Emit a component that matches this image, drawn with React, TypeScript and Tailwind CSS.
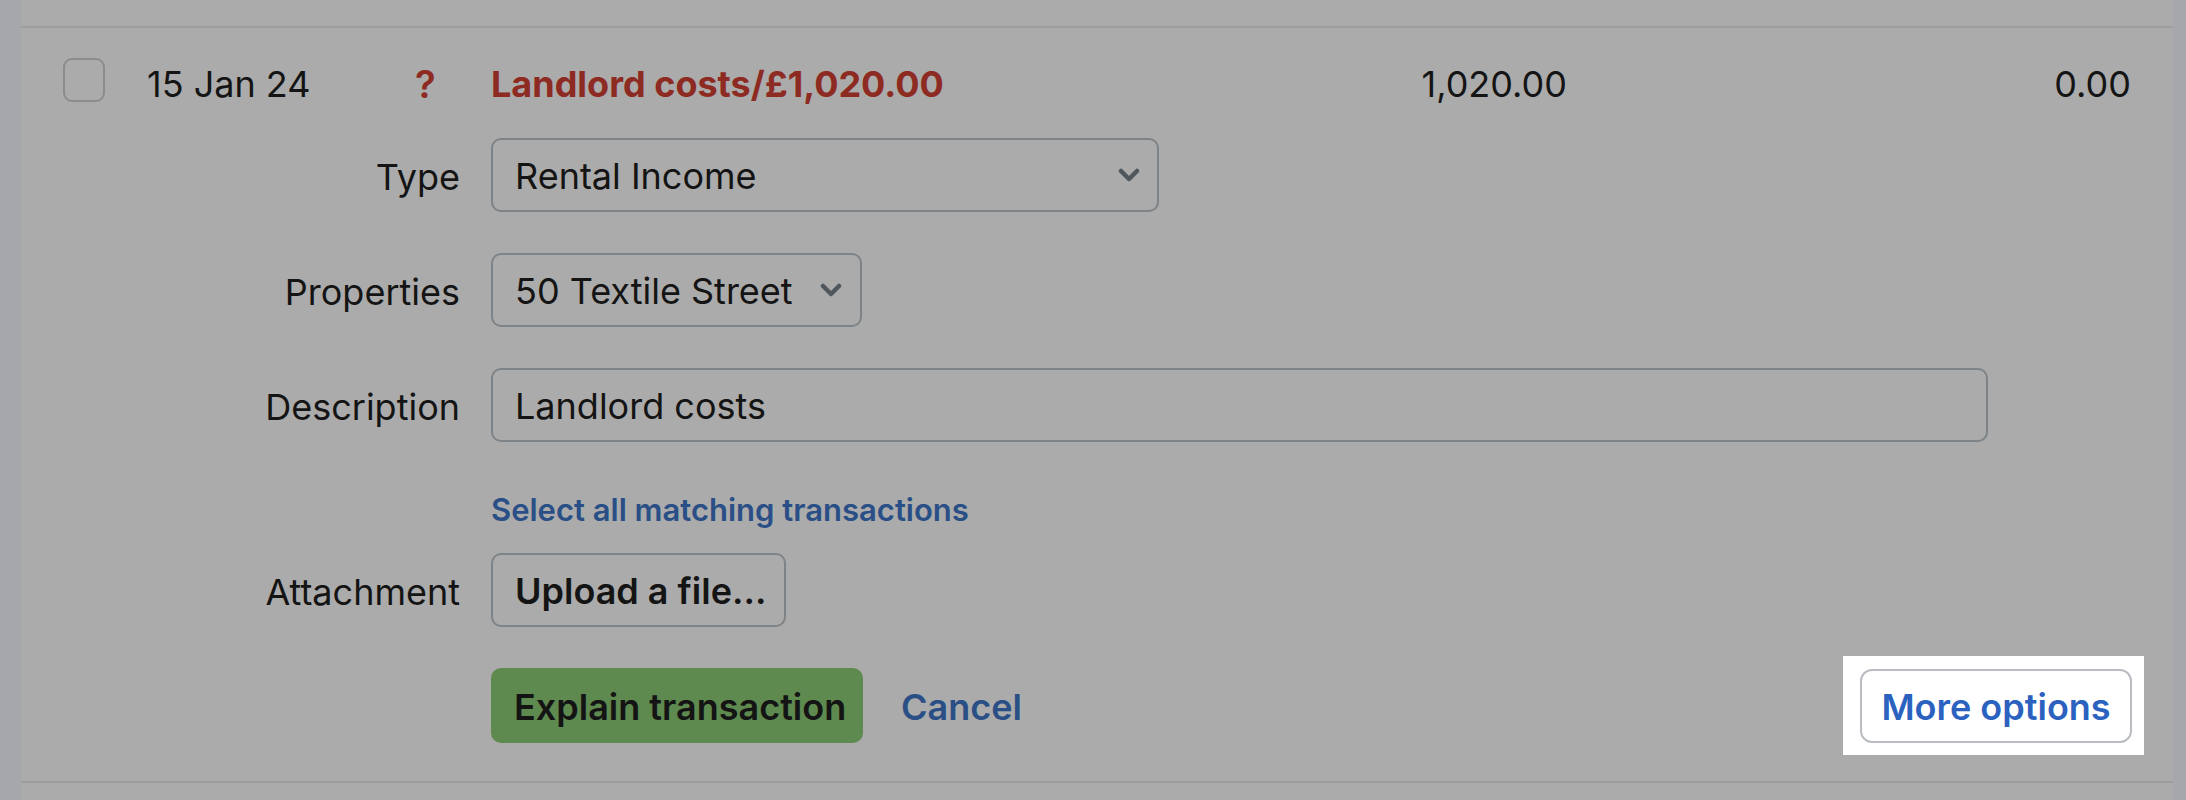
import React from "react"

function Chevron() {
  return (
    <svg width="22" height="14" viewBox="0 0 22 14" fill="none">
      <path d="M3 3l8 8 8-8" stroke="#4f575d" strokeWidth="4.5" strokeLinecap="round" strokeLinejoin="round" />
    </svg>
  )
}

function Label({ children }: { children: React.ReactNode }) {
  return <div className="w-[439px] shrink-0 text-right pt-[4px]">{children}</div>
}

export default function App() {
  return (
    <div
      className="w-[2186px] h-[800px] flex bg-[#ababab] text-[#141414] overflow-hidden"
      style={{ fontFamily: "Inter, 'Noto Sans', sans-serif" }}
    >
      <div className="w-[21px] shrink-0 bg-[#a5a7aa]" />
      <div className="flex-1 flex flex-col">
        <div className="h-[26px] shrink-0" />
        <div className="border-t-2 border-b-2 border-[#9c9d9e] flex flex-col pt-[30px] pb-[38px]">
          {/* transaction row */}
          <div className="flex items-center h-[44px] text-[36px]">
            <div className="ml-[42px] w-[42px] h-[44px] rounded-[9px] border-2 border-[#8a8d90] shrink-0" />
            <div className="ml-[42px] w-[268px] shrink-0 mt-[8px]">15 Jan 24</div>
            <div className="w-[76px] shrink-0 font-semibold text-[#8d2a22] mt-[8px] text-[38px]">?</div>
            <div className="w-[730px] shrink-0 font-bold text-[#8d2a22] mt-[8px]">Landlord costs/£1,020.00</div>
            <div className="w-[346px] shrink-0 text-right mt-[8px]">1,020.00</div>
            <div className="flex-1 text-right pr-[42px] mt-[8px]">0.00</div>
          </div>

          <div className="flex items-center gap-[31px] mt-[36px] text-[36px]">
            <Label>Type</Label>
            <div className="w-[668px] h-[74px] rounded-[10px] border-2 border-[#7e8387] flex items-center justify-between pl-[22px] pr-[17px]">
              <span className="pt-[2px]">Rental Income</span>
              <Chevron />
            </div>
          </div>

          <div className="flex items-center gap-[31px] mt-[41px] text-[36px]">
            <Label>Properties</Label>
            <div className="w-[371px] h-[74px] rounded-[10px] border-2 border-[#7e8387] flex items-center justify-between pl-[22px] pr-[18px]">
              <span className="pt-[2px]">50 Textile Street</span>
              <Chevron />
            </div>
          </div>

          <div className="flex items-center gap-[31px] mt-[41px] text-[36px]">
            <Label>Description</Label>
            <div className="w-[1497px] h-[74px] rounded-[10px] border-2 border-[#7e8387] flex items-center pl-[22px]">
              <span className="pt-[2px]">Landlord costs</span>
            </div>
          </div>

          <div className="flex items-center gap-[31px] mt-[46px] h-[44px]">
            <Label>{""}</Label>
            <span className="text-[31px] font-semibold text-[#2a4f86]">Select all matching transactions</span>
          </div>

          <div className="flex items-center gap-[31px] mt-[21px] text-[36px]">
            <Label>Attachment</Label>
            <div className="w-[295px] h-[74px] rounded-[10px] border-2 border-[#7e8387] flex items-center pl-[22px] font-semibold">
              <span className="pt-[2px]">Upload a file...</span>
            </div>
          </div>

          <div className="flex items-center mt-[41px] text-[36px] pr-[29px]">
            <div className="w-[470px] shrink-0" />
            <div className="w-[372px] h-[75px] rounded-[10px] bg-[#5e8a50] flex items-center pl-[23px] font-semibold">
              <span className="pt-[2px]">Explain transaction</span>
            </div>
            <span className="ml-[38px] pt-[2px] font-semibold text-[#2a4f86]">Cancel</span>
            <div className="ml-auto bg-white pl-[17px] pr-[12px] pt-[13px] pb-[12px] -my-[13px]">
              <div className="w-[272px] h-[74px] rounded-[12px] border-2 border-[#b9bdc1] flex items-center justify-center font-semibold text-[#2b62bf]">
                <span className="pt-[2px]">More options</span>
              </div>
            </div>
          </div>
        </div>
      </div>
      <div className="w-[13px] shrink-0 bg-[#a5a7aa]" />
    </div>
  )
}
